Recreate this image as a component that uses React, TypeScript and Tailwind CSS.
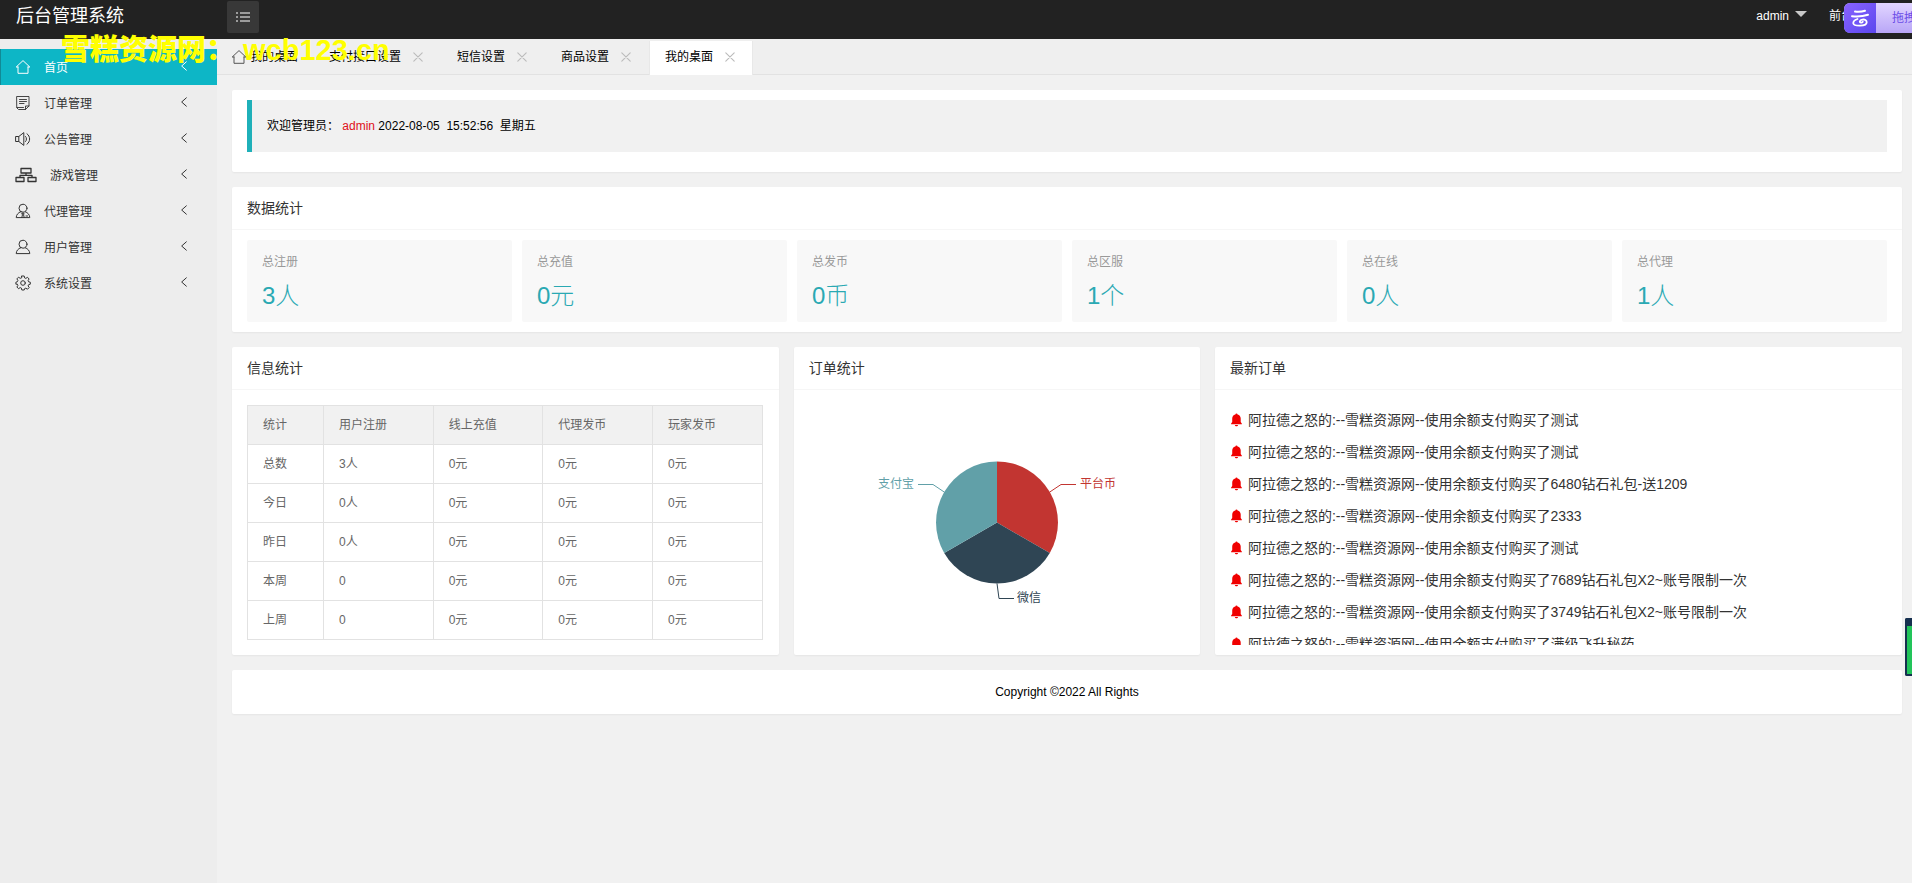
import React from "react";

type IconProps = { className?: string };

const stroke = { fill: "none", stroke: "currentColor", strokeLinejoin: "round" as const, strokeLinecap: "round" as const };

const HomeIcon = ({ className }: IconProps) => (
  <svg viewBox="0 0 16 16" className={className} {...stroke} strokeWidth={1} aria-hidden="true">
    <path d="M3 8H1.200L8 1.600 14.800 8H13M3 8v6.300h10V8" />
  </svg>
);
const OrderIcon = ({ className }: IconProps) => (
  <svg viewBox="0 0 16 16" className={className} {...stroke} strokeWidth={0.9} aria-hidden="true">
    <path d="M2 1.500h12v9.500L10.500 14.500H3.500L2 13zM14 11h-3.500v3.500M4.500 4.500h7M4.500 6.500h7M4.500 8.500h4.500M2 12.500h6.500" />
  </svg>
);
const SpeakerIcon = ({ className }: IconProps) => (
  <svg viewBox="0 0 16 16" className={className} {...stroke} strokeWidth={1} aria-hidden="true">
    <path d="M1 5.500h2.800v5H1zM3.800 5.500 8.800 1.600v12.800l-5-3.900M10.600 5.500c1.200 1.300 1.200 3.700 0 5M12 2.800c3.600 2.500 3.600 7.900 0 10.400" />
  </svg>
);
const TreeIcon = ({ className }: IconProps) => (
  <svg viewBox="0 0 22 16" className={className} {...stroke} strokeWidth={1.300} aria-hidden="true">
    <path d="M6 1.500h10v4.500H6zM1 10.500h8v4H1zM13 10.500h8v4h-8zM11 6v2.300M5 10.500V8.300h12v2.200" />
  </svg>
);
const AgentIcon = ({ className }: IconProps) => (
  <svg viewBox="0 0 16 16" className={className} {...stroke} strokeWidth={1} aria-hidden="true">
    <circle cx="8" cy="5.200" r="4" />
    <path d="M5.800 8.700C3 9.700 1.400 11.700 1.200 14.600h13.600c-.2-2.900-1.800-4.900-4.600-5.900M7 10.200h2L8.600 12l.6 2.600M7 10.200l.4 1.800-.6 2.600M11 13h1.600" />
  </svg>
);
const UserIcon = ({ className }: IconProps) => (
  <svg viewBox="0 0 16 16" className={className} {...stroke} strokeWidth={1} aria-hidden="true">
    <circle cx="8" cy="5.200" r="4" />
    <path d="M5.800 8.700C3 9.700 1.400 11.700 1.200 14.600h13.600c-.2-2.900-1.800-4.900-4.600-5.900" />
  </svg>
);
const GearIcon = ({ className }: IconProps) => (
  <svg viewBox="0 0 16 16" className={className} {...stroke} strokeWidth={1} aria-hidden="true">
    <circle cx="8" cy="8" r="2.300" />
    <path d="M6.800 1h2.400l.4 1.900 1.200.5 1.700-1.100 1.600 1.700-1 1.600.5 1.200 1.700.4v2l-1.700.5-.5 1.200 1.100 1.600-1.700 1.700-1.700-1-1.200.4L9.200 15H6.800l-.4-1.900-1.200-.5-1.700 1.100-1.600-1.700 1-1.600-.5-1.200L.9 9.200v-2l1.500-.5.500-1.200-1-1.600 1.600-1.700 1.700 1.100 1.200-.4z" />
  </svg>
);
const BellIcon = ({ className }: IconProps) => (
  <svg viewBox="-1 -.5 13 15" className={className} fill="currentColor" aria-hidden="true">
    <path d="M6 0c.7 0 1.100.4 1.200 1C9.500 1.500 10.600 3.300 10.600 5.500v3.600l1.200 1.600v1H.2v-1l1.200-1.600V5.500c0-2.200 1.100-4 3.400-4.500C4.900.4 5.300 0 6 0zM4.200 12.400h3.600c-.2.900-.9 1.400-1.800 1.400s-1.600-.5-1.800-1.400z" />
  </svg>
);
const Chevron = ({ className }: IconProps) => (
  <svg viewBox="0 0 8 12" className={className} {...stroke} strokeWidth={1.200} aria-hidden="true">
    <path d="M6.800 1 1.200 6l5.600 5" />
  </svg>
);
const Cross = () => (
  <svg viewBox="0 0 10 10" className="h-2.5 w-2.5" {...stroke} strokeWidth={1.100} aria-hidden="true">
    <path d="m.8.8 8.400 8.400M9.200.8.8 9.200" />
  </svg>
);

const menu = [
  { label: "首页", Icon: HomeIcon, active: true },
  { label: "订单管理", Icon: OrderIcon },
  { label: "公告管理", Icon: SpeakerIcon },
  { label: "游戏管理", Icon: TreeIcon, wide: true },
  { label: "代理管理", Icon: AgentIcon },
  { label: "用户管理", Icon: UserIcon },
  { label: "系统设置", Icon: GearIcon },
];

const tabs = ["支付接口设置", "短信设置", "商品设置", "我的桌面"];

const stats = [
  ["总注册", "3人"],
  ["总充值", "0元"],
  ["总发币", "0币"],
  ["总区服", "1个"],
  ["总在线", "0人"],
  ["总代理", "1人"],
];

const columns = ["统计", "用户注册", "线上充值", "代理发币", "玩家发币"];
const rows = [
  ["总数", "3人", "0元", "0元", "0元"],
  ["今日", "0人", "0元", "0元", "0元"],
  ["昨日", "0人", "0元", "0元", "0元"],
  ["本周", "0", "0元", "0元", "0元"],
  ["上周", "0", "0元", "0元", "0元"],
];

const orders = ["测试", "测试", "6480钻石礼包-送1209", "2333", "测试", "7689钻石礼包X2~账号限制一次", "3749钻石礼包X2~账号限制一次", "满级飞升秘药"];

function Card({ title, className = "", children }: { title?: string; className?: string; children: React.ReactNode }) {
  return (
    <section className={`rounded-xs bg-white shadow-[0_1px_2px_0_rgba(0,0,0,0.05)] ${className}`}>
      {title && <h2 className="h-[43px] border-b border-[#f6f6f6] px-[15px] text-sm leading-[42px] text-[#333]">{title}</h2>}
      {children}
    </section>
  );
}

function Header() {
  return (
    <header className="flex h-[39px] items-start overflow-hidden bg-[#222] text-white">
      <h1 className="w-[227px] shrink-0 pl-4 text-lg leading-8">后台管理系统</h1>
      <button aria-label="菜单" className="mt-px flex h-8 w-8 items-center justify-center rounded-xs bg-[#383838]">
        <svg viewBox="0 0 14 10" className="h-2.5 w-3.5" stroke="#fff" strokeWidth={1.200} aria-hidden="true">
          <path d="M0 1h2M4 1h10M0 5h2M4 5h10M0 9h2M4 9h10" />
        </svg>
      </button>
      <nav className="ml-auto flex h-8 items-center text-xs">
        <button className="flex items-center gap-1.5 pr-[22px]">
          admin
          <span className="mb-1 h-0 w-0 border-x-[6px] border-t-[6px] border-x-transparent border-t-[#c8c8c8]" />
        </button>
        <a href="#front" className="w-[15px] overflow-hidden whitespace-nowrap">前台</a>
      </nav>
      <button className="mt-[3px] flex h-[30px] w-[68px] shrink-0 overflow-hidden rounded-l-md bg-linear-to-b from-[#e2d5ff] to-[#b9a6f7] text-xs leading-[30px] text-[#6a4be8]">
        <span className="flex w-8 shrink-0 items-center justify-center self-stretch bg-linear-to-br from-[#8a63ff] to-[#5b46ee] text-white">
          <svg viewBox="0 0 20 20" className="h-5 w-5" {...stroke} strokeWidth={2} aria-hidden="true">
            <path d="M5 3.600c3.500.5 7 .2 10-.8" />
            <path d="M2 8.200c5.500.6 11 .2 16-1.400" />
            <path d="M7.500 11C4.800 12 3 13.500 3.300 15.400c.3 1.700 2.200 2.400 6.700 2.300 4.500-.1 6.700-1.200 6.700-3.400 0-2-2-3.100-4.200-2.700-2.300.4-3.500 2.200-2.100 2.900 1 .4 2-.1 2.400-.8" strokeWidth={1.800} />
          </svg>
        </span>
        <span className="whitespace-nowrap pl-4">拖拽上传</span>
      </button>
    </header>
  );
}

function Sidebar() {
  return (
    <aside className="w-[217px] shrink-0 bg-[#ededed] pt-2.5">
      <ul>
        {menu.map(({ label, Icon, active, wide }) => (
          <li key={label}>
            <a
              href="#menu"
              className={`flex h-9 items-center pr-[29px] text-xs ${active ? "border-l border-[#118a96] bg-[#0db6c6] pl-3.5 text-white" : "pl-[15px] text-[#333]"}`}
            >
              <Icon className={wide ? "h-4 w-[22px]" : "h-4 w-4"} />
              <span className="ml-[13px] pt-0.5">{label}</span>
              <Chevron className="ml-auto mb-0.5 h-2.5 w-2" />
            </a>
          </li>
        ))}
      </ul>
    </aside>
  );
}

function TabBar() {
  return (
    <div className="flex h-9 border-b border-[#e2e2e2] bg-[#efefef] text-xs text-black">
      <a href="#home" className="flex w-24 items-center gap-[3px] pl-3.5">
        <HomeIcon className="h-4 w-4 text-[#555]" />
        我的桌面
      </a>
      {tabs.map((tab, i) => (
        <div
          key={tab}
          className={`flex items-center gap-3 border-x pr-[17px] ${i === 3 ? "mt-0.5 -mb-px border-[#e8e8e8] bg-white pb-[3px] pl-[15px]" : "border-transparent pl-[15px]"}`}
        >
          <a href="#tab">{tab}</a>
          <button aria-label={`关闭${tab}`} className="text-[#bbb]">
            <Cross />
          </button>
        </div>
      ))}
    </div>
  );
}

function PieChart() {
  return (
    <svg viewBox="0 0 376 235" className="mx-auto h-[235px] w-[376px]" fontSize="12" role="img" aria-label="订单统计">
      <g transform="translate(0 -.5)">
        <path d="M188 118V57A61 61 0 0 1 240.800 148.500z" fill="#c23531" />
        <path d="M188 118l52.800 30.500a61 61 0 0 1-105.600 0z" fill="#2f4554" />
        <path d="M188 118l-52.800 30.500A61 61 0 0 1 188 57z" fill="#61a0a8" />
        <g fill="none">
          <path d="M240.800 87.500 252 80h15" stroke="#c23531" />
          <path d="M188 179l2 15h15" stroke="#2f4554" />
          <path d="M135.200 87.500 124 80h-15" stroke="#61a0a8" />
        </g>
      </g>
      <text x="271" y="83" fill="#c23531">平台币</text>
      <text x="208" y="197" fill="#2f4554">微信</text>
      <text x="105" y="83" textAnchor="end" fill="#61a0a8">支付宝</text>
    </svg>
  );
}

export default function App() {
  return (
    <div className="relative flex min-h-screen flex-col overflow-hidden bg-[#f1f1f1] font-['Liberation_Sans','Noto_Sans_CJK_SC',sans-serif]">
      <Header />
      <div className="flex flex-1">
        <Sidebar />
        <div className="min-w-0 flex-1">
          <TabBar />
          <main className="flex flex-col gap-[15px] py-[15px] pr-2.5 pl-[15px]">
            <Card className="px-[15px] pt-2.5 pb-5">
              <blockquote className="border-l-[5px] border-[#1fb0b9] bg-[#f1f1f1] px-[15px] py-4 text-xs leading-5 whitespace-pre text-black">
                欢迎管理员： <span className="text-[#e01020]">admin</span> 2022-08-05  15:52:56  星期五
              </blockquote>
            </Card>
            <Card title="数据统计">
              <ul className="grid grid-cols-6 gap-2.5 px-[15px] py-2.5">
                {stats.map(([label, value]) => (
                  <li key={label} className="rounded-xs bg-[#f8f8f8] px-[15px] pt-3 pb-2">
                    <h3 className="text-xs leading-5 text-[#999]">{label}</h3>
                    <p className="pt-1.5 text-2xl leading-9 font-light text-[#2aa9b3]">{value}</p>
                  </li>
                ))}
              </ul>
            </Card>
            <div className="grid grid-cols-12 gap-[15px]">
              <Card title="信息统计" className="col-span-4">
                <div className="py-[15px] pr-4 pl-[15px]">
                  <table className="w-full table-fixed border-collapse text-left text-xs text-[#666]">
                    <colgroup>
                      <col className="w-[76px]" />
                    </colgroup>
                    <thead>
                      <tr className="h-[39px] bg-[#f1f1f1]">
                        {columns.map((c) => (
                          <th key={c} className="border border-[#e2e2e2] px-[15px] font-normal">{c}</th>
                        ))}
                      </tr>
                    </thead>
                    <tbody>
                      {rows.map((r) => (
                        <tr key={r[0]} className="h-[39px]">
                          {r.map((v, i) => (
                            <td key={i} className="border border-[#e2e2e2] px-[15px]">{v}</td>
                          ))}
                        </tr>
                      ))}
                    </tbody>
                  </table>
                </div>
              </Card>
              <Card title="订单统计" className="col-span-3">
                <div className="py-[15px]">
                  <PieChart />
                </div>
              </Card>
              <Card title="最新订单" className="col-span-5">
                <ul className="mx-[15px] mt-3.5 h-[241px] overflow-hidden text-sm leading-8 text-[#333]">
                  {orders.map((o, i) => (
                    <li key={i} className="flex items-center gap-1.5 whitespace-nowrap">
                      <BellIcon className="h-3.5 w-3 text-[#f00000]" />
                      阿拉德之怒的:--雪糕资源网--使用余额支付购买了{o}
                    </li>
                  ))}
                </ul>
              </Card>
            </div>
            <Card className="py-3 text-center text-xs leading-5 text-black">
              <footer>Copyright ©2022 All Rights</footer>
            </Card>
          </main>
        </div>
      </div>
      <p className="pointer-events-none absolute top-8 left-[61px] text-[29px] leading-9 font-black whitespace-pre text-[#ff0]">雪糕资源网： wcb123.cn</p>
      <button aria-label="展开" className="absolute top-[618px] right-0 h-[58px] w-[7px] rounded-l-xs border-y-2 border-l-2 border-t-8 border-[#16304f] bg-[#22c45a]" />
    </div>
  );
}
